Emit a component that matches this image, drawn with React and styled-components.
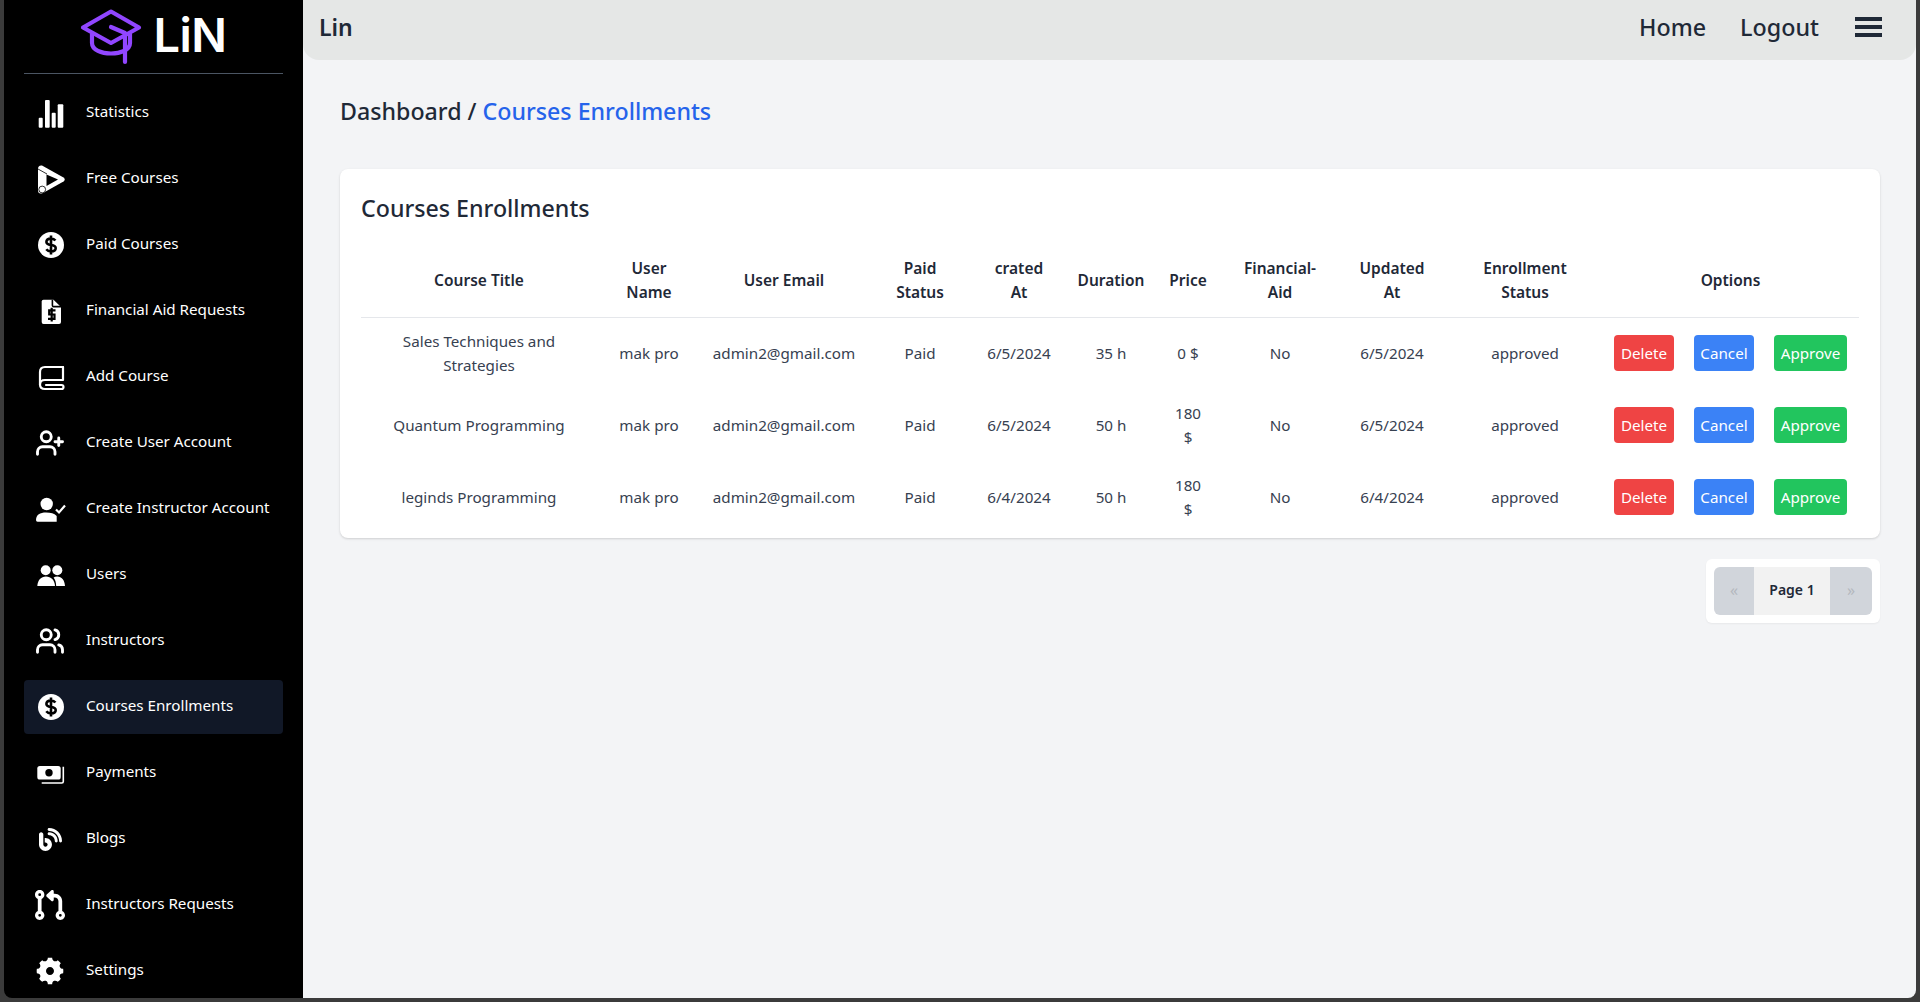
import React from "react";
import styled, { createGlobalStyle } from "styled-components";
import { LuUserPlus, LuUsers } from "react-icons/lu";
import { RiSettings5Fill } from "react-icons/ri";
import { FaBlog, FaCodePullRequest } from "react-icons/fa6";

const FONT = `"Noto Sans", "Liberation Sans", sans-serif`;

const Global = createGlobalStyle`
  html, body { margin: 0; padding: 0; height: 100%; background: #3b3b3b; }
  #root { height: 100%; }
  * { box-sizing: border-box; }
  body { font-family: ${FONT}; overflow: hidden; }
`;

const Frame = styled.div`
  display: flex;
  width: 1920px;
  height: 1002px;
  padding: 0 4px 4px;
`;

const Sidebar = styled.aside`
  width: 299px;
  flex: none;
  background: #000;
  border-radius: 0 0 0 8px;
  padding: 0 20px;
  display: flex;
  flex-direction: column;
  overflow: hidden;
`;

const Logo = styled.div`
  height: 74px;
  flex: none;
  display: flex;
  align-items: center;
  justify-content: center;
  gap: 11px;
  border-bottom: 1px solid #4b5563;
`;

const LogoText = styled.span`
  font-family: Inter, sans-serif;
  font-size: 47px;
  font-weight: 600;
  color: #fff;
  letter-spacing: -0.5px;
  line-height: 1;
  padding-bottom: 4px;
`;

const Nav = styled.nav`
  display: flex;
  flex-direction: column;
  gap: 12px;
  padding-top: 12px;
`;

const NavItem = styled.a`
  height: 54px;
  flex: none;
  display: flex;
  align-items: center;
  gap: 20px;
  padding: 0 10px;
  border-radius: 4px;
  background: ${(p) => (p.$active ? "#111827" : "transparent")};
  color: #fff;
  font-size: 15.2px;
  white-space: nowrap;
`;

const NavLabel = styled.span`
  padding-bottom: 4px;
`;

const IconSlot = styled.span`
  width: 32px;
  height: 32px;
  flex: none;
  display: flex;
  align-items: center;
  justify-content: center;
  color: #fff;
`;

const Main = styled.main`
  flex: 1;
  min-width: 0;
  background: #f3f4f6;
  border-radius: 0 0 8px 0;
  display: flex;
  flex-direction: column;
`;

const Header = styled.header`
  height: 60px;
  flex: none;
  background: #e5e7e6;
  border-radius: 0 0 16px 16px;
  padding: 0 34px 7px 16px;
  display: flex;
  align-items: center;
  justify-content: space-between;
  color: #1f2937;
`;

const Brand = styled.span`
  font-size: 23px;
  font-weight: 600;
`;

const HeaderNav = styled.div`
  display: flex;
  align-items: center;
  gap: 34px;
  font-size: 23.3px;
  font-weight: 500;
`;

const Burger = styled.span`
  display: flex;
  flex-direction: column;
  justify-content: space-between;
  width: 27px;
  height: 20px;
  margin-left: 2px;
  span { height: 4px; background: #1f2937; }
`;

const Content = styled.div`
  padding: 0 36px 0 37px;
  display: flex;
  flex-direction: column;
`;

const Crumbs = styled.div`
  margin-top: 33px;
  height: 37px;
  font-size: 23.2px;
  font-weight: 500;
  color: #1f2937;
  line-height: 36px;
  span { color: #2563eb; }
`;

const Card = styled.section`
  margin-top: 39px;
  background: #fff;
  border-radius: 8px;
  box-shadow: 0 1px 3px rgba(0,0,0,.1), 0 1px 2px rgba(0,0,0,.06);
  padding: 21px 21px 0;
  height: 369px;
`;

const Title = styled.h2`
  margin: 0;
  font-size: 23.2px;
  line-height: 36px;
  font-weight: 500;
  color: #1f2937;
`;

const Table = styled.table`
  margin-top: 18px;
  width: 100%;
  border-collapse: collapse;
  table-layout: fixed;
  color: #374151;
  font-size: 15.2px;
  text-align: center;
  line-height: 24px;
`;

const Col = styled.col`
  width: ${(p) => p.$w}px;
`;

const Th = styled.th`
  font-size: 15.5px;
  font-weight: 600;
  color: #1f2937;
  height: 73px;
  padding: 0 ${(p) => p.$pad ?? 16}px;
  border-bottom: 1px solid #e5e7eb;
`;

const TitleTh = styled(Th)`
  padding: 0 21px 0 16px;
`;

const Td = styled.td`
  height: 72px;
  padding: 0 ${(p) => p.$pad ?? 16}px;
`;

const TitleCell = styled(Td)`
  padding: 0 21px 0 16px;
`;

const Options = styled.div`
  display: flex;
  justify-content: center;
  gap: 20px;
`;

const Btn = styled.button`
  height: 36px;
  width: ${(p) => p.$w}px;
  padding: 0;
  border: 0;
  border-radius: 4px;
  color: #fff;
  font-family: inherit;
  font-size: 15.2px;
  background: ${(p) => p.$bg};
`;

const PagerWrap = styled.div`
  align-self: flex-end;
  margin-top: 21px;
  background: #fff;
  padding: 8px;
  border-radius: 6px;
  box-shadow: 0 1px 2px rgba(0,0,0,.05);
  display: flex;
`;

const PagerBtn = styled.span`
  width: ${(p) => (p.$left ? 40 : 42)}px;
  height: 48px;
  padding-bottom: 3px;
  display: flex;
  align-items: center;
  justify-content: center;
  background: #d1d5db;
  color: #b4b8be;
  font-size: 16px;
  border-radius: ${(p) => (p.$left ? "6px 0 0 6px" : "0 6px 6px 0")};
`;

const PagerLabel = styled.span`
  width: 76px;
  height: 48px;
  padding-bottom: 3px;
  display: flex;
  align-items: center;
  justify-content: center;
  background: #f2f2f2;
  color: #1f2937;
  font-size: 14px;
  font-weight: 600;
`;

const Svg = ({ children, ...rest }) => (
  <svg width="32" height="32" viewBox="0 0 32 32" fill="#fff" {...rest}>{children}</svg>
);

const IconBars = () => (
  <Svg>
    <rect x="4.7" y="20.7" width="4" height="10" rx="1" />
    <rect x="11" y="3" width="4.7" height="27.7" rx="1" />
    <rect x="17.7" y="15.7" width="4" height="15" rx="1" />
    <rect x="23.7" y="7.3" width="5.6" height="23.4" rx="1" />
  </Svg>
);

const IconPlay = () => (
  <Svg>
    <path d="M8 2.5 L29.5 14.5 Q32 16.5 29.5 18.5 L9 30 Q4 32 4 27 V6 Q4 2 8 2.5 Z" />
    <path d="M12.5 11.5 L24 16.5 L12.5 23 Z" fill="#000" />
    <path d="M4 6 L13 11" stroke="#000" strokeWidth="0.8" fill="none" />
    <circle cx="8.2" cy="26.5" r="3.4" fill="#fff" stroke="#000" strokeWidth="0.8" />
  </Svg>
);

const IconDollar = () => (
  <Svg>
    <circle cx="17" cy="16" r="13" />
    <path
      d="M21.4 11.6 C20.4 10.2 18.9 9.6 17 9.6 C14 9.6 12.4 11 12.4 13 C12.4 17.5 21.7 14.6 21.7 19 C21.7 21.2 20 22.4 17 22.4 C15 22.4 13.4 21.7 12.3 20.3 M17 6.5 V25.5"
      fill="none" stroke="#000" strokeWidth="2.6"
    />
  </Svg>
);

const IconFile = () => (
  <Svg>
    <path d="M9.5 4.7 H19.5 L27 12 V27 Q27 29 25 29 H9.5 Q7.7 29 7.7 27 V6.5 Q7.7 4.7 9.5 4.7 Z" />
    <path d="M18.4 4.7 V10.6 Q18.4 11.6 19.4 11.6 H27" fill="none" stroke="#000" strokeWidth="1.6" />
    <path d="M21.5 15.4 H15.2 V19.5 H20.5 V23.8 H14 M17.7 12.8 V26.6" fill="none" stroke="#000" strokeWidth="2.2" />
  </Svg>
);

const IconBook = () => (
  <Svg fill="none" stroke="#fff" strokeWidth="2.2" strokeLinecap="round" strokeLinejoin="round">
    <path d="M29 6 H11 Q6 6 6 11 V23.5 Q6 28 11 28 H27.5 Q29.5 28 29.5 26 Q29.5 24 27.5 24 H12" />
    <path d="M29 6 V19 H11 Q6 19 6 23.5" />
  </Svg>
);

const IconUserCheck = () => (
  <Svg>
    <circle cx="12.7" cy="11" r="6.2" />
    <path d="M2 27 C2 22 6 19.6 12 19.6 C17 19.6 20 20.6 22.7 23 V28.7 H3.6 Q2 28.7 2 27 Z" />
    <path d="M22 16.5 L25 19.5 L31 12.5" fill="none" stroke="#fff" strokeWidth="2.2" />
  </Svg>
);

const IconGroup = () => (
  <Svg>
    <circle cx="11.7" cy="11.3" r="5" />
    <circle cx="23.3" cy="11.3" r="5" />
    <path d="M3.3 27 C3.8 21 7 17.6 12 17.6 C17 17.6 20.6 21 21 27 Z" />
    <path d="M22.2 27 H31 C30.6 21 27.6 17.6 23.3 17.6 C21.8 17.6 20.6 18 19.6 18.6 C21.2 20.6 22 23.4 22.2 27 Z" />
  </Svg>
);

const IconCash = () => (
  <Svg>
    <rect x="3.3" y="9" width="23.4" height="13.6" rx="2.6" />
    <circle cx="15" cy="15.7" r="3.7" fill="#000" />
    <path d="M7.7 26 H27.8 Q29.3 26 29.3 24.5 V9.7" fill="none" stroke="#fff" strokeWidth="1.6" />
  </Svg>
);

const CapLogo = () => (
  <svg width="62" height="56" viewBox="0 0 62 56" fill="none" stroke="#9146ff" strokeWidth="4.2" strokeLinecap="round" strokeLinejoin="round">
    <path d="M31 2.5 L59 18.5 L31 34 L3 18.5 Z" />
    <path d="M12 25 V34 C12 48 50 48 50 34 V25" />
    <path d="M31 18 L45 24 V53" />
  </svg>
);

const items = [
  ["Statistics", <IconBars />],
  ["Free Courses", <IconPlay />],
  ["Paid Courses", <IconDollar />],
  ["Financial Aid Requests", <IconFile />],
  ["Add Course", <IconBook />],
  ["Create User Account", <LuUserPlus size={30} strokeWidth={2.3} />],
  ["Create Instructor Account", <IconUserCheck />],
  ["Users", <IconGroup />],
  ["Instructors", <LuUsers size={30} strokeWidth={2.3} />],
  ["Courses Enrollments", <IconDollar />, true],
  ["Payments", <IconCash />],
  ["Blogs", <FaBlog size={23} />],
  ["Instructors Requests", <FaCodePullRequest size={30} />],
  ["Settings", <RiSettings5Fill size={32} />],
];

const cols = [241, 94, 176, 96, 102, 82, 72, 112, 112, 154, 257];
const heads = [
  ["User Name"], ["User Email"], ["Paid Status"], ["crated At", 26], ["Duration", 2],
  ["Price", 2], ["Financial-Aid"], ["Updated At"], ["Enrollment Status"], ["Options"],
];
const rows = [
  ["Sales Techniques and Strategies", "0 $", "6/5/2024", "35 h"],
  ["Quantum Programming", "180 $", "6/5/2024", "50 h"],
  ["leginds Programming", "180 $", "6/4/2024", "50 h"],
];

export default function App() {
  return (
    <Frame>
      <Global />
      <Sidebar>
        <Logo>
          <CapLogo />
          <LogoText>LiN</LogoText>
        </Logo>
        <Nav>
          {items.map(([label, icon, active]) => (
            <NavItem key={label} $active={active}>
              <IconSlot>{icon}</IconSlot>
              <NavLabel>{label}</NavLabel>
            </NavItem>
          ))}
        </Nav>
      </Sidebar>
      <Main>
        <Header>
          <Brand>Lin</Brand>
          <HeaderNav>
            <span>Home</span>
            <span>Logout</span>
            <Burger><span /><span /><span /></Burger>
          </HeaderNav>
        </Header>
        <Content>
          <Crumbs>Dashboard / <span>Courses Enrollments</span></Crumbs>
          <Card>
            <Title>Courses Enrollments</Title>
            <Table>
              <colgroup>
                {cols.map((w, i) => <Col key={i} $w={w} />)}
              </colgroup>
              <thead>
                <tr>
                  <TitleTh>Course Title</TitleTh>
                  {heads.map(([h, pad]) => <Th key={h} $pad={pad}>{h}</Th>)}
                </tr>
              </thead>
              <tbody>
                {rows.map(([title, price, date, dur]) => (
                  <tr key={title}>
                    <TitleCell>{title}</TitleCell>
                    <Td $pad={4}>mak pro</Td>
                    <Td $pad={4}>admin2@gmail.com</Td>
                    <Td>Paid</Td>
                    <Td $pad={4}>{date}</Td>
                    <Td>{dur}</Td>
                    <Td $pad={20}>{price}</Td>
                    <Td>No</Td>
                    <Td $pad={4}>{date}</Td>
                    <Td>approved</Td>
                    <Td $pad={0}>
                      <Options>
                        <Btn $bg="#ef4444" $w={60}>Delete</Btn>
                        <Btn $bg="#3b82f6" $w={60}>Cancel</Btn>
                        <Btn $bg="#22c55e" $w={73}>Approve</Btn>
                      </Options>
                    </Td>
                  </tr>
                ))}
              </tbody>
            </Table>
          </Card>
          <PagerWrap>
            <PagerBtn $left>«</PagerBtn>
            <PagerLabel>Page 1</PagerLabel>
            <PagerBtn>»</PagerBtn>
          </PagerWrap>
        </Content>
      </Main>
    </Frame>
  );
}
